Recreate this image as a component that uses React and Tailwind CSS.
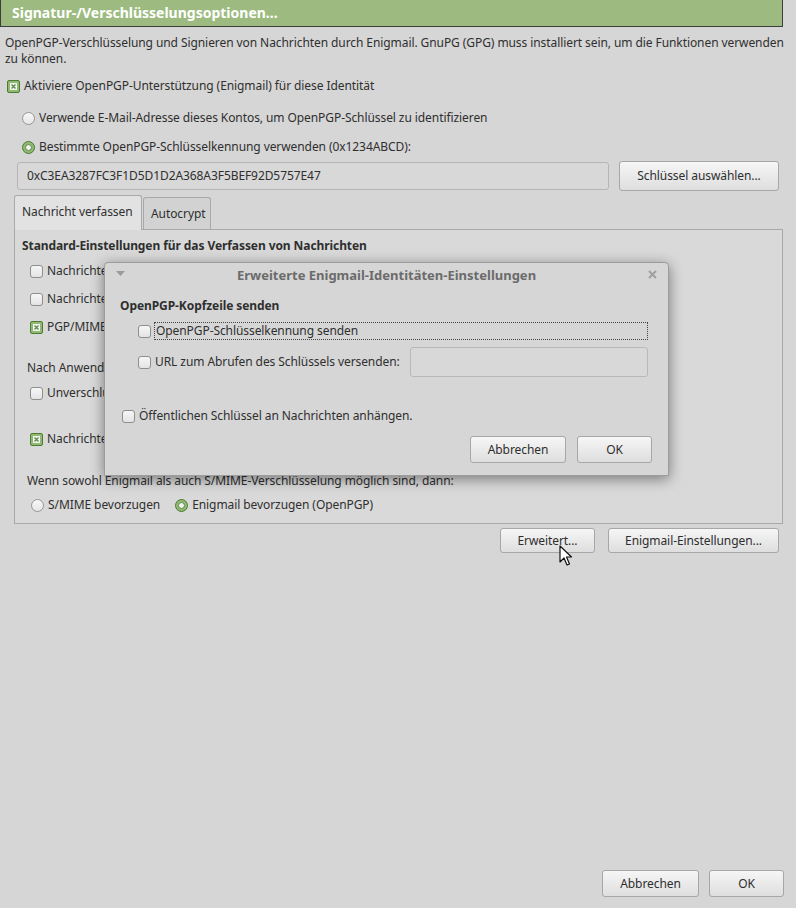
import React from "react";

const Check = ({ checked }) =>
  checked ? (
    <span className="inline-flex w-[13px] h-[13px] shrink-0 items-center justify-center rounded-[2px] border border-[#4d7a36] bg-[#8fba70]">
      <svg width="7" height="7" viewBox="0 0 7 7">
        <rect x="0" y="0" width="7" height="7" fill="#f4f4f4" />
        <path d="M1.5 1.5 L5.5 5.5 M5.5 1.5 L1.5 5.5" stroke="#5f8a48" strokeWidth="1.4" />
      </svg>
    </span>
  ) : (
    <span className="inline-block w-[13px] h-[13px] shrink-0 rounded-[3px] border border-[#8e8e8e] bg-gradient-to-b from-[#f6f6f6] to-[#e4e4e4]" />
  );

const Radio = ({ checked }) =>
  checked ? (
    <span className="inline-flex w-[13px] h-[13px] shrink-0 items-center justify-center rounded-full border border-[#4d7a36] bg-[#8fba70]">
      <span className="w-[7px] h-[7px] rounded-full bg-[#f2f2f2] border border-[#5f8a48]" />
    </span>
  ) : (
    <span className="inline-block w-[13px] h-[13px] shrink-0 rounded-full border border-[#959595] bg-gradient-to-b from-[#f8f8f8] to-[#e6e6e6]" />
  );

const Btn = ({ children, className = "" }) => (
  <div
    className={`flex items-center justify-center rounded-[3px] border border-[#a7a7a7] bg-gradient-to-b from-[#f6f6f6] to-[#dedede] text-[#2e2e2e] whitespace-nowrap ${className}`}
  >
    {children}
  </div>
);

const Row = ({ children, className = "" }) => (
  <div className={`flex items-center h-[16px] leading-[16px] whitespace-nowrap ${className}`}>{children}</div>
);

export default function App() {
  return (
    <div
      className="relative w-[796px] h-[908px] overflow-hidden bg-[#d6d6d6] text-[12px] tracking-[-0.08px] text-[#2f2f2f] flex flex-col"
      style={{ fontFamily: '"Noto Sans", "Open Sans", sans-serif' }}
    >
      <div className="w-[783px] h-[27px] shrink-0 bg-[#9dbb80] border-x border-b border-[#3d3d3d] pl-[11px] text-[14px] tracking-normal font-bold text-white leading-[25px]">
        Signatur-/Verschlüsselungsoptionen...
      </div>

      <p className="mt-[8px] pl-[5px] pr-[10px] leading-[16px]">
        OpenPGP-Verschlüsselung und Signieren von Nachrichten durch Enigmail. GnuPG (GPG) muss installiert sein, um die Funktionen verwenden zu können.
      </p>

      <Row className="mt-[11px] pl-[7px] gap-[4px]">
        <Check checked />
        <span>Aktiviere OpenPGP-Unterstützung (Enigmail) für diese Identität</span>
      </Row>

      <Row className="mt-[16px] pl-[22px] gap-[4px]">
        <Radio />
        <span>Verwende E-Mail-Adresse dieses Kontos, um OpenPGP-Schlüssel zu identifizieren</span>
      </Row>

      <Row className="mt-[13px] pl-[22px] gap-[4px]">
        <Radio checked />
        <span>Bestimmte OpenPGP-Schlüsselkennung verwenden (0x1234ABCD):</span>
      </Row>

      <div className="mt-[6px] flex items-center h-[30px] pl-[17px]">
        <div className="w-[592px] h-[28px] rounded-[3px] border border-[#b5b5b5] bg-[#d8d8d8] pl-[9px] leading-[26px]">
          0xC3EA3287FC3F1D5D1D2A368A3F5BEF92D5757E47
        </div>
        <Btn className="ml-[10px] w-[160px] h-[30px]">Schlüssel auswählen...</Btn>
      </div>

      <div className="mt-[4px] ml-[14px] w-[769px] flex flex-col">
        <div className="flex items-end h-[35px] relative z-10">
          <div className="h-[35px] w-[128px] rounded-t-[3px] border border-b-0 border-[#a9a9a9] bg-[#e2e2e2] pl-[7px] leading-[32px] whitespace-nowrap">
            Nachricht verfassen
          </div>
          <div className="ml-[1px] h-[32px] w-[68px] rounded-t-[3px] border border-b-0 border-[#a9a9a9] bg-[#d2d2d2] pl-[7px] leading-[31px] mb-[1px] whitespace-nowrap">
            Autocrypt
          </div>
        </div>
        <div className="-mt-[1px] h-[295px] border border-[#a9a9a9] bg-[#d9d9d9] flex flex-col">
          <Row className="mt-[8px] pl-[7px] font-bold">Standard-Einstellungen für das Verfassen von Nachrichten</Row>
          <Row className="mt-[9px] pl-[15px] gap-[4px]">
            <Check />
            <span>Nachrichten standardmäßig verschlüsseln</span>
          </Row>
          <Row className="mt-[12px] pl-[15px] gap-[4px]">
            <Check />
            <span>Nachrichten standardmäßig signieren</span>
          </Row>
          <Row className="mt-[12px] pl-[15px] gap-[4px]">
            <Check checked />
            <span>PGP/MIME standardmäßig verwenden</span>
          </Row>
          <Row className="mt-[25px] pl-[12px]">Nach Anwendung der Standardeinstellungen und Regeln:</Row>
          <Row className="mt-[9px] pl-[15px] gap-[4px]">
            <Check />
            <span>Unverschlüsselte Nachrichten signieren</span>
          </Row>
          <Row className="mt-[30px] pl-[15px] gap-[4px]">
            <Check checked />
            <span>Nachrichten beim Verschlüsseln signieren</span>
          </Row>
          <Row className="mt-[26px] pl-[12px]">
            Wenn sowohl Enigmail als auch S/MIME-Verschlüsselung möglich sind, dann:
          </Row>
          <Row className="mt-[8px] pl-[16px]">
            <Radio />
            <span className="ml-[4px]">S/MIME bevorzugen</span>
            <span className="ml-[15px] flex">
              <Radio checked />
            </span>
            <span className="ml-[4px]">Enigmail bevorzugen (OpenPGP)</span>
          </Row>
        </div>
      </div>

      <div className="mt-[4px] flex justify-end pr-[17px] gap-[13px]">
        <Btn className="w-[95px] h-[25px]">Erweitert...</Btn>
        <Btn className="w-[171px] h-[25px]">Enigmail-Einstellungen...</Btn>
      </div>

      <div className="flex-1" />

      <div className="mb-[11px] flex justify-end pr-[12px] gap-[10px]">
        <Btn className="w-[97px] h-[27px]">Abbrechen</Btn>
        <Btn className="w-[75px] h-[27px]">OK</Btn>
      </div>

      {/* modal dialog */}
      <div className="absolute left-[104px] top-[262px] w-[565px] h-[214px] rounded-t-[4px] border border-[#9c9c9c] bg-[#d6d6d6] shadow-[0_3px_14px_rgba(0,0,0,0.45)] flex flex-col">
        <div className="relative h-[23px] flex items-center justify-center">
          <svg className="absolute left-[11px] top-[8px]" width="9" height="6" viewBox="0 0 9 6">
            <path d="M0 0 L9 0 L4.5 5 Z" fill="#9a9a9a" />
          </svg>
          <span className="font-bold text-[13px] tracking-normal text-[#6b6b6b] leading-[16px]">Erweiterte Enigmail-Identitäten-Einstellungen</span>
          <svg className="absolute right-[11px] top-[7px]" width="9" height="9" viewBox="0 0 9 9">
            <path d="M1 1 L8 8 M8 1 L1 8" stroke="#a0a0a0" strokeWidth="2" />
          </svg>
        </div>
        <Row className="mt-[12px] pl-[15px] font-bold">OpenPGP-Kopfzeile senden</Row>
        <div className="mt-[8px] flex items-center h-[18px] pl-[33px]">
          <Check />
          <span className="ml-[3px] w-[494px] h-[18px] border border-dotted border-[#444] leading-[16px] pl-[1px] whitespace-nowrap">
            OpenPGP-Schlüsselkennung senden
          </span>
        </div>
        <div className="mt-[7px] flex items-center h-[30px] pl-[33px] pr-[20px]">
          <Check />
          <span className="ml-[4px] leading-[16px] whitespace-nowrap">URL zum Abrufen des Schlüssels versenden:</span>
          <div className="ml-auto w-[238px] h-[30px] rounded-[3px] border border-[#b8b8b8] bg-[#d8d8d8]" />
        </div>
        <Row className="mt-[31px] pl-[17px] gap-[4px]">
          <Check />
          <span>Öffentlichen Schlüssel an Nachrichten anhängen.</span>
        </Row>
        <div className="mt-[12px] flex justify-end pr-[16px] gap-[11px]">
          <Btn className="w-[96px] h-[27px]">Abbrechen</Btn>
          <Btn className="w-[75px] h-[27px]">OK</Btn>
        </div>
      </div>

      {/* mouse pointer */}
      <svg className="absolute left-[559px] top-[545px]" width="13" height="22" viewBox="0 0 13 22">
        <path d="M1 1 L1 17 L5 13 L8 20 L10.5 19 L7.5 12 L12.5 12 Z" fill="#fff" stroke="#111" strokeWidth="1.2" strokeLinejoin="round" />
      </svg>
    </div>
  );
}
